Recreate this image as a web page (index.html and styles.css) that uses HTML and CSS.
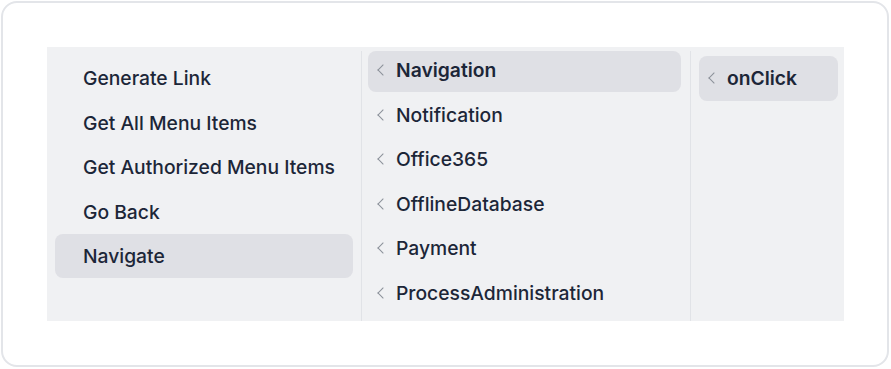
FILE: index.html
```html
<!DOCTYPE html>
<html lang="en">
  <head>
    <title>Menu picker</title>
    <link rel="stylesheet" href="styles.css">
  </head>
  <body>
    <article class="card">
      <section class="panel">
        <ul class="column actions">
          <li class="item">Generate Link</li>
          <li class="item">Get All Menu Items</li>
          <li class="item">Get Authorized Menu Items</li>
          <li class="item">Go Back</li>
          <li class="item active">Navigate</li>
        </ul>
        <ul class="column modules">
          <li class="item active"><span class="chevron"></span>Navigation</li>
          <li class="item"><span class="chevron"></span>Notification</li>
          <li class="item"><span class="chevron"></span>Office365</li>
          <li class="item"><span class="chevron"></span>OfflineDatabase</li>
          <li class="item"><span class="chevron"></span>Payment</li>
          <li class="item"><span class="chevron"></span>ProcessAdministration</li>
        </ul>
        <ul class="column events">
          <li class="item active"><span class="chevron"></span>onClick</li>
        </ul>
      </section>
    </article>
  </body>
</html>
```

FILE: styles.css
```css
:root {
  --card-border: #e3e5e9;
  --panel-bg: #f0f1f3;
  --divider: #e1e3e7;
  --active-bg: #dfe0e5;
  --text: #1c2638;
  --chevron: #8b9099;
}

html, body {
  margin: 0;
  background: #fff;
}

body {
  padding: 1px 0 0 1px;
  font-family: Inter, "Noto Sans", sans-serif;
  font-size: 19.3px;
  color: var(--text);
}

.card {
  box-sizing: border-box;
  width: 888px;
  height: 366px;
  border: 2px solid var(--card-border);
  border-radius: 16px;
  padding: 44px 43px 44px 44px;
}

.panel {
  display: flex;
  height: 274px;
  padding-top: 4px;
  box-sizing: border-box;
  background: var(--panel-bg);
}

.column {
  list-style: none;
  margin: 0;
  box-sizing: border-box;
}
  .column + .column {
    border-left: 1px solid var(--divider);
  }

.item {
  display: flex;
  align-items: center;
  font-weight: 500;
  line-height: 24px;
  border-radius: 8px;
  white-space: nowrap;
}
  .item.active {
    background: var(--active-bg);
  }

.chevron {
  width: 7px;
  height: 7px;
  margin: 0 9px 0 2px;
  border-left: 1.5px solid var(--chevron);
  border-bottom: 1.5px solid var(--chevron);
  transform: rotate(45deg);
  flex: none;
}

/* left column */
.actions {
  width: 314px;
  padding: 5px 8px 0;
}
  .actions .item {
    height: 44px;
    margin-bottom: 0.5px;
    padding-left: 28px;
  }

/* middle column */
.modules {
  width: 329px;
  padding: 0 9px 0 6px;
}
  .modules .item {
    height: 41px;
    margin-bottom: 3.5px;
    padding: 0 0 3px 9px;
    box-sizing: border-box;
  }
  .modules .active {
    font-weight: 600;
  }

/* right column */
.events {
  flex: 1;
  padding: 5px 6px 0 8px;
}
  .events .item {
    height: 45px;
    padding: 0 0 1px 9px;
    box-sizing: border-box;
    font-weight: 600;
  }
```
